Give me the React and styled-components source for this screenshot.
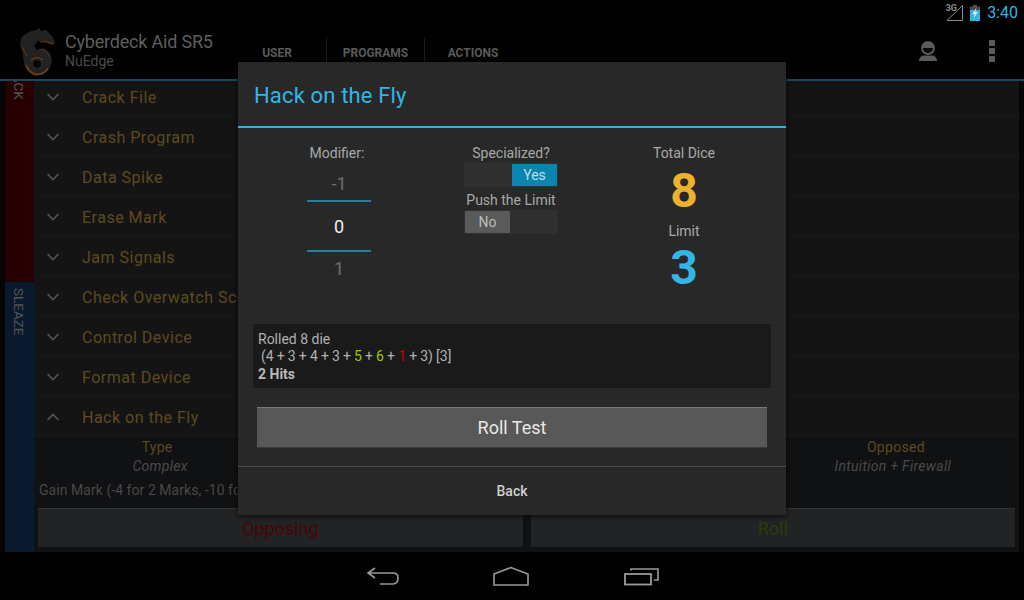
import React from 'react';
import styled, { createGlobalStyle } from 'styled-components';

const GlobalStyle = createGlobalStyle`
  html, body {
    margin: 0;
    padding: 0;
    background: #000;
  }
  * {
    box-sizing: border-box;
  }
`;

const attackRows = ['Crack File', 'Crash Program', 'Data Spike', 'Erase Mark', 'Jam Signals'];
const sleazeRows = ['Check Overwatch Score', 'Control Device', 'Format Device'];

function Chevron({ up }) {
  return (
    <svg width="14" height="8" viewBox="0 0 14 8">
      <path d={up ? 'M1.5 7 L7 1.5 L12.5 7' : 'M1.5 1 L7 6.5 L12.5 1'} fill="none" stroke="#565656" strokeWidth="1.6" />
    </svg>
  );
}

function Logo() {
  return (
    <svg width="38" height="50" viewBox="0 0 38 50">
      <path
        d="M5 8 L12 4 L18 3 L20 1 L22 4 L27 3 L33 9 L36 15 L34 18 L26 15 L19 14 L15 19 L18 23 L25 21 L31 26 L33 34 L30 43 L24 48 L15 49 L8 44 L5 37 L4 27 L1 18 L2 11 Z"
        fill="#222222"
      />
      <path d="M3 20 Q6 24 8 29" fill="none" stroke="#6b3a10" strokeWidth="1" />
      <path d="M21 15 Q28 14 34 17" fill="none" stroke="#6b3a10" strokeWidth="1.2" />
      <path d="M20 22 Q29 24 31 30" fill="none" stroke="#5a3210" strokeWidth="0.8" />
      <path d="M7 38 Q10 46 18 47.5 Q26 47 29 41" fill="none" stroke="#7a4312" strokeWidth="1.4" />
      <path d="M12 33 Q18 28 24 33" fill="none" stroke="#7a4312" strokeWidth="1.2" />
      <circle cx="18" cy="37" r="3.8" fill="#050505" />
    </svg>
  );
}

export default function App() {
  return (
    <>
      <GlobalStyle />
      <Screen>
        <StatusBar>
          <svg width="20" height="18" viewBox="0 0 20 18">
            <path d="M18.5 1.5 V16.5 H3 Z" fill="none" stroke="#8a8a8a" strokeWidth="1" />
          </svg>
          <NetworkLabel>3G</NetworkLabel>
          <svg width="10" height="16" viewBox="0 0 10 16">
            <rect x="3" y="0" width="4" height="2" fill="#555" />
            <rect x="0" y="1.5" width="10" height="4" fill="#4b4b4b" />
            <rect x="0" y="5" width="10" height="11" fill="#33b5e5" />
            <path d="M6.5 2.5 L2.5 9 H5 L3.5 13.5 L7.5 7 H5 Z" fill="#fff" />
          </svg>
          <Clock>3:40</Clock>
        </StatusBar>

        <ActionBar>
          <LogoSlot>
            <Logo />
          </LogoSlot>
          <AppTitle>
            <AppName>Cyberdeck Aid SR5</AppName>
            <AppSub>NuEdge</AppSub>
          </AppTitle>
          <Tabs>
            <Tab $width={99}>USER</Tab>
            <Tab $width={98}>PROGRAMS</Tab>
            <Tab $width={96} $last>ACTIONS</Tab>
          </Tabs>
          <ActionIcons>
            <svg width="20" height="20" viewBox="0 0 20 20">
              <circle cx="10" cy="7" r="7" fill="#5a5a5a" />
              <path d="M5 7 A5 5 0 0 0 15 7 Z" fill="#0a0a0a" />
              <path d="M1 20 Q1 15 6 14.5 H14 Q19 15 19 20 Z" fill="#5a5a5a" />
            </svg>
            <Overflow>
              <i />
              <i />
              <i />
            </Overflow>
          </ActionIcons>
        </ActionBar>

        <ListArea>
          <ListScroll>
            <Rail>
              <RailSection $bg="#260000" $height={240} $pad={8}>ATTACK</RailSection>
              <RailSection $bg="#0a1a2e" $height={270} $pad={6}>SLEAZE</RailSection>
            </Rail>
            <Rows>
              {attackRows.concat(sleazeRows).map((name) => (
                <Row key={name}>
                  <ChevronSlot>
                    <Chevron />
                  </ChevronSlot>
                  <RowName>{name}</RowName>
                </Row>
              ))}
              <Row>
                <ChevronSlot>
                  <Chevron up />
                </ChevronSlot>
                <RowName>Hack on the Fly</RowName>
              </Row>
              <Details>
                <DetailGrid>
                  <DetailCell>
                    <DetailLabel>Type</DetailLabel>
                    <DetailValue $shift={3}>Complex</DetailValue>
                  </DetailCell>
                  <DetailCell />
                  <DetailCell />
                  <DetailCell>
                    <DetailLabel>Opposed</DetailLabel>
                    <DetailValue $shift={-3}>Intuition + Firewall</DetailValue>
                  </DetailCell>
                </DetailGrid>
                <Description>Gain Mark (-4 for 2 Marks, -10 for 3 Marks)</Description>
                <DetailButtons>
                  <GhostButton $color="#4a0404">Opposing</GhostButton>
                  <GhostButton $color="#2c3d06">Roll</GhostButton>
                </DetailButtons>
              </Details>
            </Rows>
          </ListScroll>
        </ListArea>

        <NavBar>
          <svg width="34" height="20" viewBox="0 0 34 20">
            <path d="M9 2 L2 7 L9 12 M2 7 H27 Q32 7 32 12 Q32 18 27 18 H14" fill="none" stroke="#999" strokeWidth="1.6" />
          </svg>
          <svg width="38" height="20" viewBox="0 0 38 20">
            <path d="M1 19 V8 L18 1.5 L35 8 V19 Z" fill="none" stroke="#999" strokeWidth="1.6" />
          </svg>
          <svg width="36" height="20" viewBox="0 0 36 20">
            <rect x="1" y="8" width="26" height="10.5" fill="none" stroke="#999" strokeWidth="1.8" />
            <path d="M7 4.5 V3 H34 V14 H30" fill="none" stroke="#999" strokeWidth="1.6" />
          </svg>
        </NavBar>

        <Dialog>
          <DialogTitle>Hack on the Fly</DialogTitle>
          <DialogBody>
            <Column>
              <ModifierLabel>Modifier:</ModifierLabel>
              <Picker>
                <PickerValue $height={36}>-1</PickerValue>
                <PickerValue $current $height={52}>0</PickerValue>
                <PickerValue $height={30}>1</PickerValue>
              </Picker>
            </Column>
            <Column>
              <ColumnLabel>Specialized?</ColumnLabel>
              <Toggle $on>
                <Thumb $on>Yes</Thumb>
              </Toggle>
              <ToggleLabel>Push the Limit</ToggleLabel>
              <Toggle>
                <Thumb>No</Thumb>
              </Toggle>
            </Column>
            <Column>
              <ColumnLabel>Total Dice</ColumnLabel>
              <BigNumber $color="#ecb22e">8</BigNumber>
              <LimitLabel>Limit</LimitLabel>
              <LimitNumber $color="#33b5e5">3</LimitNumber>
            </Column>
          </DialogBody>
          <RollLog>
            <div>Rolled 8 die</div>
            <LogLine>
              (4 + 3 + 4 + 3 + <Die $color="#99cc00">5</Die> + <Die $color="#99cc00">6</Die> + <Die $color="#cc0000">1</Die> + 3) [3]
            </LogLine>
            <LogHits>2 Hits</LogHits>
          </RollLog>
          <RollButton>Roll Test</RollButton>
          <DialogFooter>Back</DialogFooter>
        </Dialog>
      </Screen>
    </>
  );
}

const Screen = styled.div`
  position: relative;
  display: flex;
  flex-direction: column;
  width: 1024px;
  height: 600px;
  overflow: hidden;
  background: #000;
  font-family: 'Roboto', sans-serif;
`;

const StatusBar = styled.div`
  position: relative;
  display: flex;
  align-items: center;
  justify-content: flex-end;
  height: 25px;
  padding-right: 6px;
  background: #000;

  svg:first-child {
    margin-right: 6px;
  }
`;

const NetworkLabel = styled.span`
  position: absolute;
  right: 67px;
  top: 3px;
  font-size: 9px;
  font-weight: 700;
  color: #8a8a8a;
`;

const Clock = styled.span`
  margin-left: 7px;
  font-size: 16px;
  color: #33b5e5;
`;

const ActionBar = styled.div`
  display: flex;
  height: 56px;
  border-bottom: 2px solid #134a5f;
  background: #000;
`;

const LogoSlot = styled.div`
  display: flex;
  align-items: center;
  width: 65px;
  padding-left: 19px;
`;

const AppTitle = styled.div`
  display: flex;
  flex-direction: column;
  width: 163px;
  padding-top: 6px;
`;

const AppName = styled.div`
  font-size: 18px;
  line-height: 22px;
  letter-spacing: -0.2px;
  color: #5e5e5e;
`;

const AppSub = styled.div`
  font-size: 14px;
  line-height: 17px;
  color: #4a4a4a;
`;

const Tabs = styled.div`
  display: flex;
  margin-top: 12px;
`;

const Tab = styled.div`
  display: flex;
  align-items: center;
  justify-content: center;
  width: ${(p) => p.$width}px;
  height: 32px;
  font-size: 12px;
  font-weight: 700;
  color: #5a5a5a;
  border-right: ${(p) => (p.$last ? 'none' : '1px solid #1c1c1c')};
`;

const ActionIcons = styled.div`
  display: flex;
  align-items: center;
  gap: 51px;
  margin-left: auto;
  padding: 0 29px 2px 0;
`;

const Overflow = styled.div`
  display: flex;
  flex-direction: column;
  gap: 2px;

  i {
    display: block;
    width: 6px;
    height: 6px;
    background: #5a5a5a;
  }
`;

const ListArea = styled.div`
  flex: 1;
  min-height: 0;
  overflow: hidden;
  padding: 0 5px;
  background: #050506;
`;

const ListScroll = styled.div`
  display: flex;
  margin-top: -39px;
`;

const Rail = styled.div`
  display: flex;
  flex-direction: column;
  width: 29px;
  flex-shrink: 0;
`;

const RailSection = styled.div`
  height: ${(p) => p.$height}px;
  padding: ${(p) => p.$pad}px 1px 0 0;
  background: ${(p) => p.$bg};
  writing-mode: vertical-rl;
  font-size: 13.5px;
  line-height: 28px;
  color: #535353;
`;

const Rows = styled.div`
  flex: 1;
  min-width: 0;
  padding-top: 35px;
  background: #141414;
`;

const Row = styled.div`
  display: flex;
  align-items: center;
  height: 40px;
  border-bottom: 1px solid #191919;
`;

const ChevronSlot = styled.div`
  display: flex;
  align-items: center;
  width: 48px;
  padding-left: 12px;
`;

const RowName = styled.div`
  padding-top: 1px;
  font-size: 16px;
  letter-spacing: 0.5px;
  color: #5f4a1e;
`;

const Details = styled.div`
  height: 115px;
  background: #101113;
`;

const DetailGrid = styled.div`
  display: grid;
  grid-template-columns: repeat(4, 1fr);
  padding-top: 1px;
`;

const DetailCell = styled.div`
  text-align: center;
`;

const DetailLabel = styled.div`
  font-size: 14px;
  line-height: 19px;
  letter-spacing: 0.3px;
  color: #5f4a1e;
`;

const DetailValue = styled.div`
  position: relative;
  left: ${(p) => p.$shift}px;
  font-size: 14px;
  line-height: 19px;
  letter-spacing: 0.3px;
  font-style: italic;
  color: #4a4a4a;
`;

const Description = styled.div`
  margin-top: 5px;
  padding-left: 5px;
  font-size: 14px;
  line-height: 19px;
  letter-spacing: 0.05px;
  color: #484848;
`;

const DetailButtons = styled.div`
  display: grid;
  grid-template-columns: 1fr 1fr;
  gap: 8px;
  margin-top: 8px;
  padding: 0 4px;
`;

const GhostButton = styled.div`
  display: flex;
  align-items: center;
  justify-content: center;
  height: 39px;
  border-top: 1px solid #333436;
  background: #222325;
  font-size: 18px;
  color: ${(p) => p.$color};
`;

const NavBar = styled.div`
  display: flex;
  align-items: center;
  justify-content: center;
  gap: 93px;
  height: 48px;
  padding-left: 2px;
  background: #000;
`;

const Dialog = styled.div`
  position: absolute;
  left: 238px;
  top: 62px;
  display: flex;
  flex-direction: column;
  width: 548px;
  height: 453px;
  background: #282828;
  box-shadow: 0 1px 5px rgba(0, 0, 0, 0.8);
`;

const DialogTitle = styled.div`
  display: flex;
  align-items: center;
  height: 66px;
  padding: 2px 0 0 16px;
  border-bottom: 2px solid #33b5e5;
  font-size: 22px;
  letter-spacing: 0.15px;
  color: #33b5e5;
`;

const DialogBody = styled.div`
  display: grid;
  grid-template-columns: 172px 172px 174px;
  height: 196px;
  padding: 16px 15px 0;
`;

const Column = styled.div`
  display: flex;
  flex-direction: column;
  align-items: center;
`;

const ColumnLabel = styled.div`
  font-size: 14px;
  line-height: 19px;
  color: #a8a8a8;
`;

const ModifierLabel = styled(ColumnLabel)`
  margin-right: 4px;
`;

const Picker = styled.div`
  display: flex;
  flex-direction: column;
  align-items: center;
  width: 64px;
  margin-top: 1px;
`;

const PickerValue = styled.div`
  display: flex;
  align-items: center;
  justify-content: center;
  width: 100%;
  height: ${(p) => p.$height}px;
  padding-top: ${(p) => (p.$current ? '0' : '2px')};
  border-top: ${(p) => (p.$current ? '2px solid #2a7f9c' : 'none')};
  border-bottom: ${(p) => (p.$current ? '2px solid #2a7f9c' : 'none')};
  font-size: 18px;
  color: ${(p) => (p.$current ? '#f0f0f0' : '#6e6e6e')};
`;

const Toggle = styled.div`
  display: flex;
  justify-content: ${(p) => (p.$on ? 'flex-end' : 'flex-start')};
  width: 94px;
  height: 24px;
  padding: 1px;
  background: #303030;
`;

const Thumb = styled.div`
  display: flex;
  align-items: center;
  justify-content: center;
  width: 45px;
  height: 22px;
  border-radius: 1px;
  background: ${(p) => (p.$on ? '#0a85b0' : '#5a5a5a')};
  font-size: 14px;
  color: ${(p) => (p.$on ? '#c4dbe4' : '#bcbcbc')};
`;

const ToggleLabel = styled(ColumnLabel)`
  margin: 3px 0 0;
  line-height: 20px;
`;

const BigNumber = styled.div`
  font-size: 48px;
  line-height: 56px;
  font-weight: 700;
  color: ${(p) => p.$color};
`;

const LimitNumber = styled(BigNumber)`
  margin-top: -1px;
`;

const LimitLabel = styled(ColumnLabel)`
  margin-top: 3px;
`;

const RollLog = styled.div`
  height: 64px;
  margin: 0 15px;
  padding: 7px 5px 0;
  background: #1a1a1a;
  font-size: 14px;
  line-height: 17px;
  color: #b0b0b0;
`;

const LogLine = styled.div`
  padding-left: 3px;
  word-spacing: -0.35px;
`;

const Die = styled.span`
  color: ${(p) => p.$color};
`;

const LogHits = styled.div`
  margin-top: 1px;
  font-size: 14px;
  font-weight: 700;
  color: #b8b8b8;
`;

const RollButton = styled.div`
  display: flex;
  align-items: center;
  justify-content: center;
  height: 40px;
  margin: 19px 19px 0;
  border-top: 1px solid #7a7a7a;
  background: #585858;
  box-shadow: 0 1px 0 #3a3a3a;
  font-size: 18px;
  color: #e8e8e8;
`;

const DialogFooter = styled.div`
  display: flex;
  align-items: center;
  justify-content: center;
  margin-top: 19px;
  flex: 1;
  border-top: 1px solid #4a4a4a;
  font-size: 14px;
  font-weight: 500;
  color: #cfcfcf;
`;
